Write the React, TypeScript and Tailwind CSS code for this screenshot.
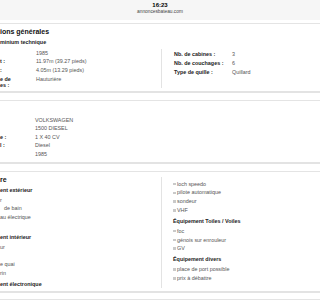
import React from "react";

const Row = ({ label, value }: { label?: React.ReactNode; value: string }) => (
  <div className="flex py-[1.2px] leading-[6.2px]">
    <div className="w-[36px] shrink-0 font-bold text-[#222]">{label}</div>
    <div className="text-[#555]">{value}</div>
  </div>
);

const Item = ({ children, pl = "" }: { children?: React.ReactNode; pl?: string }) => (
  <div className={`h-[8.8px] leading-[8.8px] text-[#555] whitespace-nowrap ${pl}`}>{children}</div>
);

const Sub = ({ children }: { children: React.ReactNode }) => (
  <div className="mt-[1px] h-[11px] leading-[11px] font-bold text-[#222] whitespace-nowrap">{children}</div>
);

const BItem = ({ children }: { children: React.ReactNode }) => (
  <div className="flex items-center h-[8.8px] leading-[8.8px] text-[#555] whitespace-nowrap">
    <span className="w-[2.5px] h-[2.5px] bg-[#c9c9c9] mr-[1.5px]" />
    {children}
  </div>
);

const RRow = ({ label, value }: { label: string; value: string }) => (
  <div className="flex h-[8.7px] leading-[8.7px]">
    <div className="w-[58px] shrink-0 font-bold text-[#222] whitespace-nowrap">{label}</div>
    <div className="text-[#555]">{value}</div>
  </div>
);

export default function App() {
  return (
    <div className="w-[320px] h-[300px] overflow-hidden bg-white font-['Liberation_Sans',Arial,sans-serif] text-[5.4px]">
      <div className="h-[20px] bg-[#f6f6f6] flex flex-col items-center">
        <div className="mt-[2px] text-[6px] leading-[7px] font-bold text-black">16:23</div>
        <div className="text-[4.8px] leading-[6px] text-[#444]">annoncesbateau.com</div>
      </div>
      <div className="h-[3px]" />

      {/* Card 1 */}
      <section className="border-t border-t-[#e4e4e4] border-b-2 border-b-[#e3e3e3] pt-[4px] pb-[2px]">
        <div className="h-[8px] leading-[8px] text-[7px] font-bold text-[#111]">ions générales</div>
        <div className="mt-[2px] h-[8px] leading-[8px] font-bold text-[#222]">minium technique</div>
        <div className="mt-[2.7px] flex">
          <div className="w-[161px] shrink-0">
            <Row value="1985" />
            <Row label="t :" value="11.97m (39.27 pieds)" />
            <Row label=":" value="4.05m (13.29 pieds)" />
            <div className="flex py-[1.2px] leading-[6.2px]">
              <div className="w-[36px] shrink-0 font-bold text-[#222]">
                <div>e de</div>
                <div>es :</div>
              </div>
              <div className="text-[#555]">Hauturière</div>
            </div>
          </div>
          <div className="border-l border-[#e3e3e3] pl-[12px] pt-[1.5px] mb-[1px]">
            <RRow label="Nb. de cabines :" value="3" />
            <RRow label="Nb. de couchages :" value="6" />
            <RRow label="Type de quille :" value="Quillard" />
          </div>
        </div>
      </section>

      {/* Card 2 */}
      <section className="mt-[7px] border-t border-t-[#e4e4e4] border-b-2 border-b-[#e3e3e3] pt-[14.4px] pb-[3px]">
        <div className="flex flex-col">
          {[
            ["", "VOLKSWAGEN"],
            ["", "1500 DIESEL"],
            ["e :", "1 X 40 CV"],
            ["l :", "Diesel"],
            ["", "1985"],
          ].map(([l, v], i) => (
            <div key={i} className="flex h-[8.6px] leading-[8.6px]">
              <div className="w-[35px] shrink-0 font-bold text-[#222]">{l}</div>
              <div className="text-[#555]">{v}</div>
            </div>
          ))}
        </div>
      </section>

      {/* Card 3 */}
      <section className="mt-[7px] border-t border-t-[#e4e4e4] border-b-2 border-b-[#e3e3e3] pb-[1.3px]">
        <div className="flex">
          <div className="w-[161px] shrink-0">
            <div className="pt-[4px] h-[12px] leading-[8px] text-[7px] font-bold text-[#111]">re</div>
            <Sub>ent extérieur</Sub>
            <Item>r</Item>
            <Item pl="pl-[4px]">de bain</Item>
            <Item>au électrique</Item>
            <Item />
            <Sub>ent intérieur</Sub>
            <Item>ur</Item>
            <Item />
            <Item>e quai</Item>
            <Item>rin</Item>
            <Sub>ent électronique</Sub>
          </div>
          <div className="border-l border-[#e3e3e3] pl-[11px] mt-[5px] pt-[3px] mb-[2px]">
            <BItem>loch speedo</BItem>
            <BItem>pilote automatique</BItem>
            <BItem>sondeur</BItem>
            <BItem>VHF</BItem>
            <Sub>Équipement Toiles / Voiles</Sub>
            <BItem>foc</BItem>
            <BItem>génois sur enrouleur</BItem>
            <BItem>GV</BItem>
            <Sub>Équipement divers</Sub>
            <BItem>place de port possible</BItem>
            <BItem>prix à débattre</BItem>
          </div>
        </div>
      </section>
      <div className="mt-[6px] border-t border-t-[#e4e4e4]" />
    </div>
  );
}
